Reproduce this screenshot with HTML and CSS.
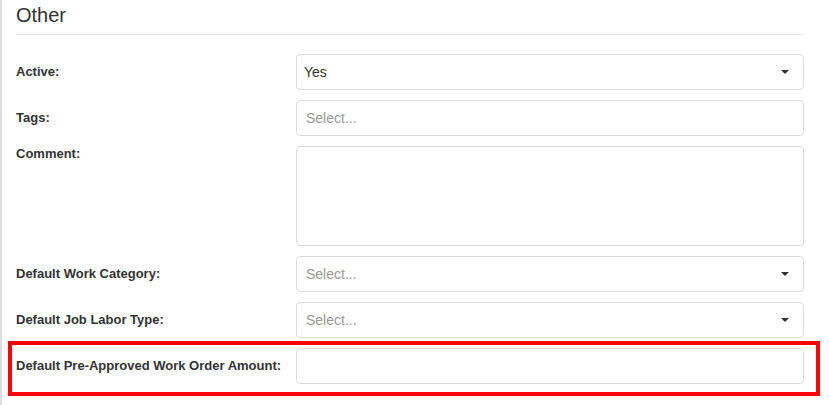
FILE: index.html
```html
<!DOCTYPE html>
<html lang="en">
<head>
    <meta charset="UTF-8">
    <title>Other</title>
    <link rel="stylesheet" href="styles.css">
</head>
<body>
    <div class="panel">
        <h2 class="section-title">Other</h2>

        <div class="form-row">
            <label class="form-label">Active:</label>
            <div class="select-box">
                <span class="select-value">Yes</span>
                <span class="caret"></span>
            </div>
        </div>

        <div class="form-row">
            <label class="form-label">Tags:</label>
            <div class="select-box">
                <span class="placeholder">Select...</span>
            </div>
        </div>

        <div class="form-row form-row-top">
            <label class="form-label">Comment:</label>
            <textarea class="form-textarea"></textarea>
        </div>

        <div class="form-row">
            <label class="form-label">Default Work Category:</label>
            <div class="select-box">
                <span class="placeholder">Select...</span>
                <span class="caret"></span>
            </div>
        </div>

        <div class="form-row">
            <label class="form-label">Default Job Labor Type:</label>
            <div class="select-box">
                <span class="placeholder">Select...</span>
                <span class="caret"></span>
            </div>
        </div>

        <div class="highlight">
            <div class="form-row">
                <label class="form-label">Default Pre-Approved Work Order Amount:</label>
                <input type="text" class="form-input">
            </div>
        </div>
    </div>
</body>
</html>
```

FILE: styles.css
```css
* {
    margin: 0;
    padding: 0;
    box-sizing: border-box;
}

body {
    background: #fff;
    color: #333;
    font-family: 'Liberation Sans', Arial, sans-serif;
    font-size: 14px;
}

.panel {
    border-left: 2px solid #ddd;
    min-height: 405px;
    padding: 0 25px 0 14px;
}

.section-title {
    font-size: 20px;
    font-weight: normal;
    color: #333;
    line-height: 24px;
    padding: 3px 0 7px;
    border-bottom: 1px solid #e5e5e5;
    margin-bottom: 19px;
}

.form-row {
    display: flex;
    align-items: center;
    margin-bottom: 10px;
}

.form-row-top {
    align-items: flex-start;
}

.form-label {
    width: 280px;
    flex-shrink: 0;
    font-size: 13px;
    font-weight: bold;
    line-height: 18px;
    color: #333;
}

.form-row-top .form-label {
    margin-top: -1px;
}

.select-box,
.form-input,
.form-textarea {
    flex: 1;
    height: 36px;
    border: 1px solid #ddd;
    border-radius: 4px;
    background: #fff;
}

.select-box {
    display: flex;
    align-items: center;
    justify-content: space-between;
    padding: 0 14px 0 7px;
}

.select-value {
    color: #333;
    font-size: 14px;
}

.placeholder {
    color: #999;
    font-size: 14px;
    padding-left: 2px;
}

.caret {
    width: 0;
    height: 0;
    border-left: 4px solid transparent;
    border-right: 4px solid transparent;
    border-top: 4px solid #333;
}

.form-textarea {
    height: 100px;
    resize: none;
    font-family: inherit;
}

.form-input {
    font-family: inherit;
    font-size: 14px;
    padding: 0 8px;
    outline: none;
}

.highlight {
    border: 4px solid #f00;
    margin: -7px -16px 0 -8px;
    padding: 3px 12px 8px 4px;
}

.highlight .form-row {
    margin-bottom: 0;
}
```
